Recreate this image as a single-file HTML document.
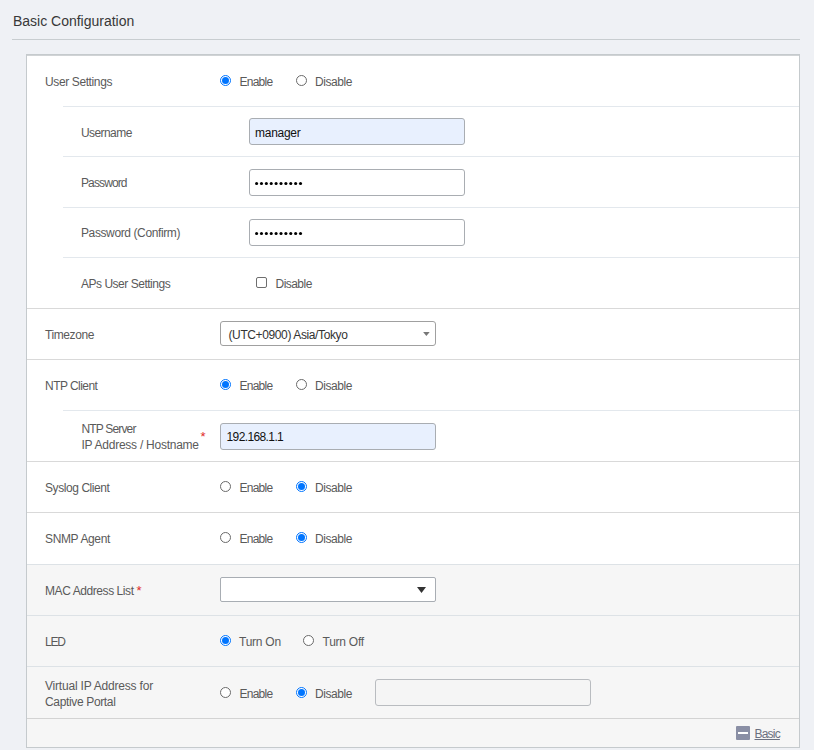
<!DOCTYPE html>
<html><head><meta charset="utf-8">
<style>
html,body{margin:0;padding:0;}
body{width:814px;height:750px;overflow:hidden;background:#eff1f5;position:relative;font-family:"Liberation Sans",sans-serif;}
.a{position:absolute;}
.t{position:absolute;white-space:nowrap;line-height:16px;font-size:12px;color:#5a5a5a;}
.title{position:absolute;white-space:nowrap;font-size:14px;line-height:20px;color:#383838;}
.hl{position:absolute;height:1px;}
.full{left:27px;width:772px;background:#d9d9d9;}
.sub{left:63px;width:736px;background:#e3e8ed;}
.gray{position:absolute;left:27px;width:772px;background:#f6f6f6;}
.inp{position:absolute;box-sizing:border-box;border:1px solid #a9adb2;border-radius:3px;background:#fff;}
.af{background:#e8f0fe;}
.radio{position:absolute;width:11px;height:11px;box-sizing:border-box;border-radius:50%;}
.r0{border:1px solid #6a6a6a;background:#fff;}
.r1{border:1px solid #0075ff;background:#fff;}
.r1::after{content:"";position:absolute;left:1px;top:1px;width:7px;height:7px;border-radius:50%;background:#0075ff;}
.cb{position:absolute;width:11px;height:11px;box-sizing:border-box;border:1px solid #6e6e6e;border-radius:2px;background:#fff;}
.dots{position:absolute;}
.dots i{position:absolute;top:0;width:4px;height:4px;border-radius:50%;background:#000;}
.req{color:#e03030;}

</style></head><body>
<div class="a" style="left:12px;top:39px;width:788px;height:1px;background:#c8cdd0"></div>
<div class="a" style="left:26px;top:54px;width:774px;height:694px;box-sizing:border-box;border:1px solid #c5cacd;background:#fff"></div>
<div class="a" style="left:27px;top:55px;width:772px;height:1px;background:#d0d3d5"></div>
<div class="gray" style="top:565px;height:182px"></div>
<div class="hl sub" style="top:106px"></div>
<div class="hl sub" style="top:156px"></div>
<div class="hl sub" style="top:207px"></div>
<div class="hl sub" style="top:257px"></div>
<div class="hl full" style="top:308px"></div>
<div class="hl full" style="top:359px"></div>
<div class="hl sub" style="top:410px"></div>
<div class="hl full" style="top:461px"></div>
<div class="hl full" style="top:512px"></div>
<div class="hl full" style="top:564px;background:#dde2e6"></div>
<div class="hl full" style="top:615px;background:#dde2e6"></div>
<div class="hl full" style="top:666px;background:#dde2e6"></div>
<div class="hl full" style="top:718px;background:#d3d3d3"></div>

<div class="radio r1" style="left:220px;top:75px"></div>
<div class="radio r0" style="left:296px;top:75px"></div>
<div class="inp af" style="left:249px;top:118px;width:216px;height:27px"></div>
<div class="inp" style="left:249px;top:169px;width:216px;height:27px"></div>
<svg class="a" style="left:250px;top:175px" width="60" height="20"><circle cx="6.60" cy="8.5" r="1.55" fill="#000"/><circle cx="11.48" cy="8.5" r="1.55" fill="#000"/><circle cx="16.36" cy="8.5" r="1.55" fill="#000"/><circle cx="21.24" cy="8.5" r="1.55" fill="#000"/><circle cx="26.12" cy="8.5" r="1.55" fill="#000"/><circle cx="31.00" cy="8.5" r="1.55" fill="#000"/><circle cx="35.88" cy="8.5" r="1.55" fill="#000"/><circle cx="40.76" cy="8.5" r="1.55" fill="#000"/><circle cx="45.64" cy="8.5" r="1.55" fill="#000"/><circle cx="50.52" cy="8.5" r="1.55" fill="#000"/></svg>
<div class="inp" style="left:249px;top:219px;width:216px;height:27px"></div>
<svg class="a" style="left:250px;top:225px" width="60" height="20"><circle cx="6.60" cy="8.5" r="1.55" fill="#000"/><circle cx="11.48" cy="8.5" r="1.55" fill="#000"/><circle cx="16.36" cy="8.5" r="1.55" fill="#000"/><circle cx="21.24" cy="8.5" r="1.55" fill="#000"/><circle cx="26.12" cy="8.5" r="1.55" fill="#000"/><circle cx="31.00" cy="8.5" r="1.55" fill="#000"/><circle cx="35.88" cy="8.5" r="1.55" fill="#000"/><circle cx="40.76" cy="8.5" r="1.55" fill="#000"/><circle cx="45.64" cy="8.5" r="1.55" fill="#000"/><circle cx="50.52" cy="8.5" r="1.55" fill="#000"/></svg>
<div class="cb" style="left:256px;top:277px"></div>
<div class="inp" style="left:220px;top:321px;width:216px;height:25px;border-color:#a0a0a0"></div>
<svg class="a" style="left:423px;top:332px" width="7" height="4"><path d="M0.1 0H6.7L3.4 3.9Z" fill="#777"/></svg>
<div class="radio r1" style="left:220px;top:379px"></div>
<div class="radio r0" style="left:296px;top:379px"></div>
<div class="inp af" style="left:220px;top:423px;width:216px;height:27px"></div>
<div class="radio r0" style="left:220px;top:481px"></div>
<div class="radio r1" style="left:296px;top:481px"></div>
<div class="radio r0" style="left:220px;top:532px"></div>
<div class="radio r1" style="left:296px;top:532px"></div>
<div class="inp" style="left:220px;top:577px;width:216px;height:25px;border-radius:2px;border-color:#a8adb3"></div>
<svg class="a" style="left:417px;top:587px" width="9" height="6"><path d="M0 0H9L4.5 6Z" fill="#333"/></svg>
<div class="radio r1" style="left:220px;top:635px"></div>
<div class="radio r0" style="left:303px;top:635px"></div>
<div class="radio r0" style="left:220px;top:687px"></div>
<div class="radio r1" style="left:296px;top:687px"></div>
<div class="inp" style="left:375px;top:679px;width:216px;height:27px;background:#f5f5f5;border-color:#b9bcc0"></div>
<div class="a" style="left:736px;top:726px;width:14px;height:14px;background:#8a8fa5;border-radius:1px"></div>
<div class="a" style="left:738px;top:732px;width:10px;height:2px;background:#fff"></div>
<div id="title" class="title" style="left:13.00px;top:11px;letter-spacing:-0.011px">Basic Configuration</div>
<div id="us" class="t" style="left:45.00px;top:74px;letter-spacing:-0.383px">User Settings</div>
<div id="en1" class="t" style="left:239.50px;top:74px;letter-spacing:-0.750px">Enable</div>
<div id="dis1" class="t" style="left:315.00px;top:74px;letter-spacing:-0.450px">Disable</div>
<div id="uname" class="t" style="left:81.00px;top:125px;letter-spacing:-0.579px">Username</div>
<div id="mgr" class="t" style="left:255.00px;top:125px;letter-spacing:-0.267px;color:#111">manager</div>
<div id="pwd" class="t" style="left:81.00px;top:175px;letter-spacing:-0.879px">Password</div>
<div id="pwdc" class="t" style="left:81.00px;top:225px;letter-spacing:-0.391px">Password (Confirm)</div>
<div id="aps" class="t" style="left:81.00px;top:276px;letter-spacing:-0.481px">APs User Settings</div>
<div id="discb" class="t" style="left:275.50px;top:276px;letter-spacing:-0.533px">Disable</div>
<div id="tz" class="t" style="left:45.00px;top:327px;letter-spacing:-0.400px">Timezone</div>
<div id="tzv" class="t" style="left:228.50px;top:327px;letter-spacing:-0.385px;color:#333">(UTC+0900) Asia/Tokyo</div>
<div id="ntpc" class="t" style="left:45.00px;top:378px;letter-spacing:-0.539px">NTP Client</div>
<div id="en2" class="t" style="left:239.50px;top:378px;letter-spacing:-0.750px">Enable</div>
<div id="dis2" class="t" style="left:315.00px;top:378px;letter-spacing:-0.450px">Disable</div>
<div id="ntps" class="t" style="left:81.50px;top:421px;letter-spacing:-0.839px">NTP Server</div>
<div id="ipaddr" class="t" style="left:81.50px;top:437px;letter-spacing:-0.250px">IP Address / Hostname</div>
<div id="ast1" class="t req" style="left:200.50px;top:429px;letter-spacing:0.000px;font-size:13px;color:#e02a2a">*</div>
<div id="ipv" class="t" style="left:226.50px;top:429px;letter-spacing:-0.610px;color:#111">192.168.1.1</div>
<div id="sys" class="t" style="left:45.00px;top:480px;letter-spacing:-0.425px">Syslog Client</div>
<div id="en3" class="t" style="left:239.50px;top:480px;letter-spacing:-0.750px">Enable</div>
<div id="dis3" class="t" style="left:315.00px;top:480px;letter-spacing:-0.450px">Disable</div>
<div id="snmp" class="t" style="left:45.00px;top:531px;letter-spacing:-0.350px">SNMP Agent</div>
<div id="en4" class="t" style="left:239.50px;top:531px;letter-spacing:-0.750px">Enable</div>
<div id="dis4" class="t" style="left:315.00px;top:531px;letter-spacing:-0.450px">Disable</div>
<div id="mac" class="t" style="left:45.00px;top:583px;letter-spacing:-0.423px">MAC Address List</div>
<div id="ast2" class="t req" style="left:136.50px;top:583px;letter-spacing:0.000px;font-size:13px;color:#e02a2a">*</div>
<div id="led" class="t" style="left:45.00px;top:634px;letter-spacing:-1.200px">LED</div>
<div id="ton" class="t" style="left:239.00px;top:634px;letter-spacing:-0.250px">Turn On</div>
<div id="toff" class="t" style="left:322.50px;top:634px;letter-spacing:-0.250px">Turn Off</div>
<div id="vip1" class="t" style="left:45.00px;top:678px;letter-spacing:-0.198px">Virtual IP Address for</div>
<div id="vip2" class="t" style="left:45.00px;top:694px;letter-spacing:-0.350px">Captive Portal</div>
<div id="en5" class="t" style="left:239.50px;top:686px;letter-spacing:-0.750px">Enable</div>
<div id="dis5" class="t" style="left:315.00px;top:686px;letter-spacing:-0.450px">Disable</div>
<div id="basic" class="t" style="left:754.50px;top:726px;letter-spacing:-0.800px;color:#6b7080;text-decoration:underline">Basic</div>


</body></html>
